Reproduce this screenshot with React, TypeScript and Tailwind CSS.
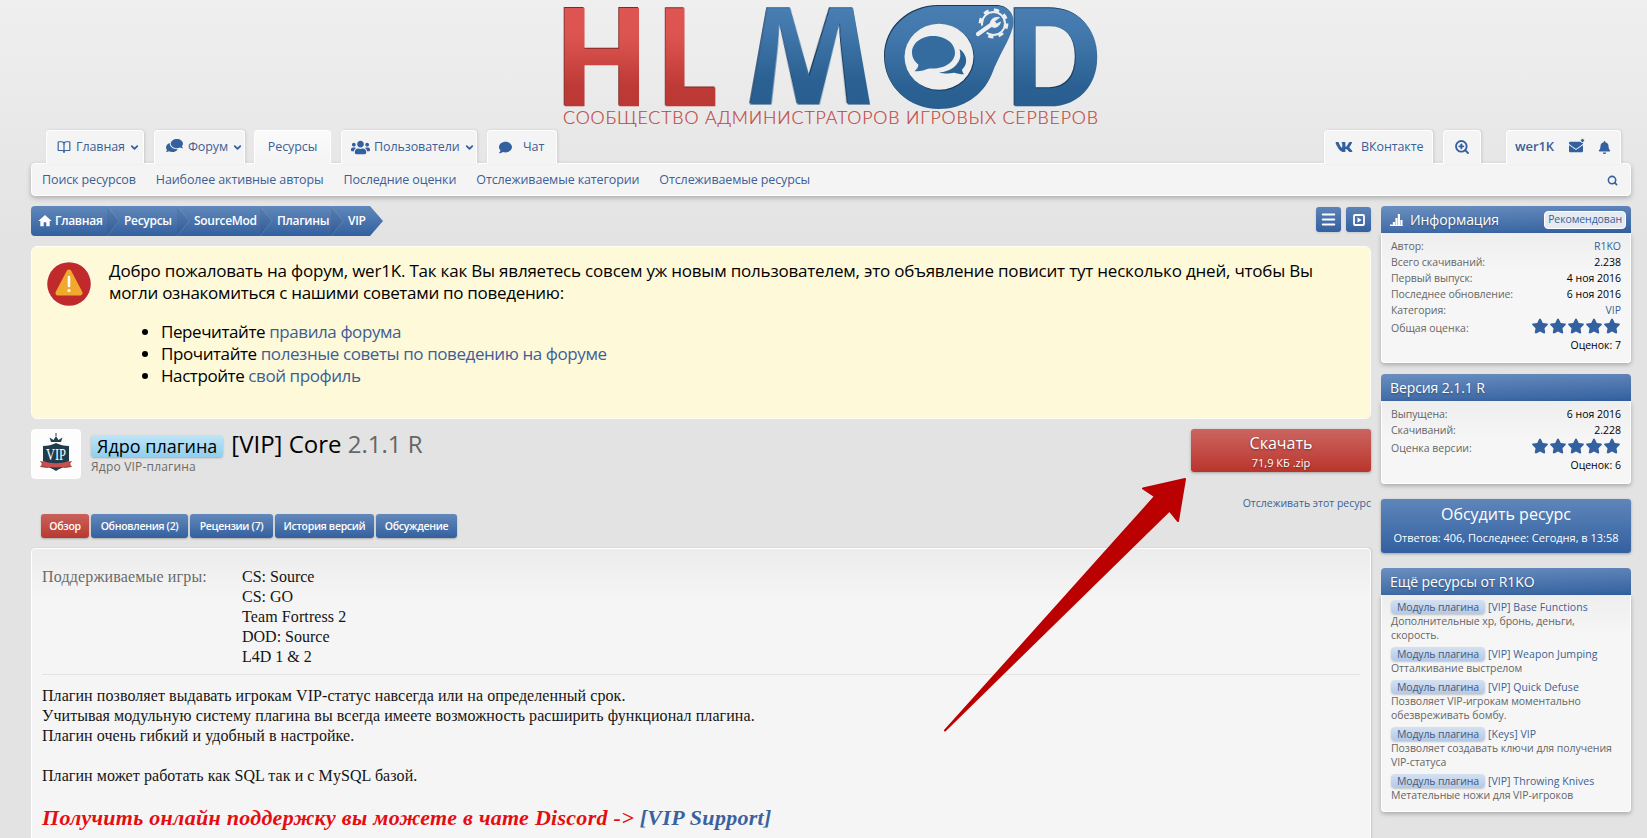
import React from "react";
import { BookOpen, ChevronDown, Menu, Search, ZoomIn } from "lucide-react";
import { FaBell, FaComment, FaComments, FaEnvelope, FaStar, FaUsers, FaVk } from "react-icons/fa";
import { MdHome } from "react-icons/md";

function Letter({ glyph, x, scale, inset, red }: { glyph: string; x: number; scale: number; inset: number; red?: boolean }) {
  const paint = red ? "url(#red)" : "url(#blue)";
  return (
    <g transform={`translate(${x} 105) scale(${scale} 1)`} className={red ? "drop-shadow-[-1px_-1px_0_#7a2a2a]" : "drop-shadow-[-1px_-1px_0_#1b3a5a]"}>
      <text x={-inset} y={0} fill={paint} stroke={paint} strokeWidth="2.600" fontSize="131" fontWeight="900" fontFamily="Lato, sans-serif">{glyph}</text>
    </g>
  );
}

function Logo() {
  const drop = "M938 5H996C1008 5 1015 14 1012 26C1008 41 999 52 991 73C982 95 962 108 938 108C908 108 884 86 884 56C884 27 908 5 938 5Z";
  return (
    <div className="relative ml-[559px] h-[130px] w-[544px]">
      <svg viewBox="559 0 544 130" className="h-full w-full overflow-visible">
        <defs>
          <linearGradient id="red" gradientUnits="userSpaceOnUse" x1="0" x2="0" y1="-97" y2="0">
            <stop offset="0" stopColor="#de5552" />
            <stop offset="0.3" stopColor="#dc5450" />
            <stop offset="0.8" stopColor="#be3a36" />
            <stop offset="1" stopColor="#bb3835" />
          </linearGradient>
          <linearGradient id="blue" gradientUnits="userSpaceOnUse" x1="0" x2="0" y1="-97" y2="0">
            <stop offset="0" stopColor="#487eb2" />
            <stop offset="0.3" stopColor="#4277ab" />
            <stop offset="0.8" stopColor="#2a6192" />
            <stop offset="1" stopColor="#295f90" />
          </linearGradient>
          <linearGradient id="drop" x1="0" x2="0" y1="0" y2="1">
            <stop offset="0" stopColor="#487eb2" />
            <stop offset="0.3" stopColor="#4277ab" />
            <stop offset="0.8" stopColor="#2a6192" />
            <stop offset="1" stopColor="#295f90" />
          </linearGradient>
        </defs>
        <Letter glyph="H" x={565.3} scale={0.885} inset={9.4} red />
        <Letter glyph="L" x={666.5} scale={0.84} inset={9.4} red />
        <Letter glyph="D" x={1015.4} scale={0.94} inset={9.4} />
        <path d={drop} fill="#1b3a5a" />
        <path d={drop} fill="url(#drop)" transform="translate(0.9 1)" />
        <ellipse cx="939.8" cy="57.6" rx="34.6" ry="33.2" fill="#1b3a5a" />
        <ellipse cx="939" cy="56.8" rx="34.5" ry="33" fill="#eeeeee" />
        <path d="M933 36C945 36 955 43 955 52.500C955 62 945 68.500 933 68.500C930 68.500 928 68.300 926 69.500C922 71.500 918 71 914.500 71.200C917 69 918.500 67 918.300 64.500C914.500 61.500 912 57.500 912 52.500C912 43 921.500 36 933 36Z" fill="#356ca0" />
        <path d="M959.500 49C965 53 967.500 59 965.500 64.500C964.500 67 963 68.500 962 69.500C962.300 71.500 963 73 964 74.300C960 74.300 956.500 73.500 954 72.700C949 74 943 73.500 939 72.500C951 72 959.500 64 960.300 56.500C960.500 54 960.200 51.500 959.500 49Z" fill="#2b6294" />
        <circle cx="993.500" cy="23.500" r="11.500" fill="none" stroke="#eee" strokeWidth="2" />
        <circle cx="993.500" cy="23.500" r="13.400" fill="none" stroke="#eee" strokeWidth="3" strokeDasharray="5.260 5.260" />
        <path d="M977 35L991 24" stroke="#4277ab" strokeWidth="8.500" strokeLinecap="round" />
        <path d="M978 34L991.500 24.500" stroke="#eee" strokeWidth="4.200" strokeLinecap="round" />
        <path d="M999.500 17.500C994 16.500 989.500 20 990.500 24.500C992 29 999 28.500 1000.500 22L996.500 24L994.500 21.300Z" fill="#eee" stroke="#eee" strokeWidth="0.800" />
        <text x="563" y="124" textLength="535" lengthAdjust="spacing" fontSize="17.800" fontWeight="300" fontFamily="Lato, sans-serif" fill="#bd4743" stroke="#bd4743" strokeWidth="0.200">СООБЩЕСТВО АДМИНИСТРАТОРОВ ИГРОВЫХ СЕРВЕРОВ</text>
      </svg>
      <span className="absolute left-[187px] top-[-15px] flex h-[136px] w-[128px] origin-[50%_121px] justify-center bg-[linear-gradient(to_bottom,#487eb2_18%,#4277ab_38%,#2a6192_75%,#295f90_90%)] bg-clip-text font-['Open_Sans',sans-serif] text-[136px] font-bold leading-none text-transparent drop-shadow-[-1px_-1px_0_#1b3a5a] [transform:matrix3d(1.16,0,0,0,0,1.393,0,-0.00405,0,0,1,0,0,0,0,1)]">M</span>
    </div>
  );
}

const tab = "flex h-[33px] items-center rounded-t border border-b-0 border-white bg-[#f4f4f4] text-[12.5px] tracking-[-0.1px] text-[#3c5f97] shadow-[1px_0_3px_rgba(0,0,0,0.13)]";
const ico = "text-[#33609f]";

function TopNav() {
  return (
    <>
      <div className="flex pl-[15px] pr-[10px]">
        <a className={`${tab} w-[98px] gap-[5px] pl-[10px]`}><BookOpen size={14} strokeWidth={2} className={ico} />Главная<ChevronDown size={11} strokeWidth={4} className={`${ico} -ml-px`} /></a>
        <a className={`${tab} ml-[10px] w-[91px] gap-[5px] pl-[11px]`}><FaComments size={17} className={`${ico} -mt-1 -scale-x-100`} />Форум<ChevronDown size={11} strokeWidth={4} className={`${ico} -ml-px`} /></a>
        <a className="relative z-10 -mb-px ml-[9px] flex h-[34px] w-[77px] items-center justify-center rounded-t border border-b-0 border-white bg-gradient-to-b from-[#fafafa] to-[#f4f4f4] text-[12.5px] tracking-[-0.1px] text-[#3c5f97]">Ресурсы</a>
        <a className={`${tab} ml-[10px] w-[136px] gap-[4px] pl-[9px]`}><FaUsers size={19} className={ico} />Пользователи<ChevronDown size={11} strokeWidth={4} className={ico} /></a>
        <a className={`${tab} ml-[10px] w-[70px] gap-[11px] pl-[11px]`}><FaComment size={13} className={ico} />Чат</a>
        <a className={`${tab} ml-auto w-[109px] gap-[8px] pl-[10px]`}><FaVk size={18} className={ico} />ВКонтакте</a>
        <a className={`${tab} ml-[10px] w-[38px] justify-center`}><ZoomIn size={16} strokeWidth={2.800} className={ico} /></a>
        <div className={`${tab} ml-[25px] w-[115px] pl-[8px]`}>
          <b className="w-[54px] text-[13px] font-semibold">wer1K</b>
          <span className="relative"><FaEnvelope size={14} className={ico} /><i className="absolute -right-[2px] -top-[2px] size-[5px] rounded-full border border-[#f4f4f4] bg-[#33609f]" /></span>
          <FaBell size={13} className={`${ico} ml-[15px]`} />
        </div>
      </div>
      <div className="flex h-[33px] items-center gap-[20px] rounded border border-white bg-[#f4f4f4] px-[10px] pt-px text-[12.5px] tracking-[-0.12px] text-[#3c5f97] shadow-[0_2px_5px_rgba(0,0,0,0.25)]">
        <a>Поиск ресурсов</a><a>Наиболее активные авторы</a><a>Последние оценки</a><a>Отслеживаемые категории</a><a>Отслеживаемые ресурсы</a>
        <Search size={11} strokeWidth={3.400} className="ml-auto mr-[2px] text-[#33609f]" />
      </div>
    </>
  );
}

const crumbs: [string, string][] = [["Ресурсы", "w-[70px]"], ["SourceMod", "w-[83px]"], ["Плагины", "w-[71px]"], ["VIP", "w-[52px]"]];

function Breadcrumb() {
  return (
    <div className="mt-[10px] flex h-[30px] justify-between">
      <div className="flex rounded-l-sm bg-gradient-to-b from-[#6088ba] to-[#33609f] text-[12px] font-semibold tracking-[-0.3px] text-white [clip-path:polygon(0_0,calc(100%-13px)_0,100%_50%,calc(100%-13px)_100%,0_100%)]">
        <span className="flex w-[76px] items-center gap-[2px] pb-px pl-[6px]"><MdHome size={16} />Главная</span>
        {crumbs.map(([name, width]) => (
          <span key={name} className={`${width} relative flex items-center pb-px pl-[17px]`}>
            <svg width="14" height="30" viewBox="0 0 14 30" className="absolute left-0 top-0"><path d="M0 0L12 15L0 30Z" fill="#000" opacity="0.050" /><path d="M0 0L12 15L0 30" fill="none" stroke="#fff" opacity="0.120" /></svg>
            {name}
          </span>
        ))}
      </div>
      <div className="mt-px flex gap-[5px]">
        <span className="flex size-[25px] items-center justify-center rounded-[3px] bg-gradient-to-b from-[#5c83b8] to-[#33609f] text-white shadow"><Menu size={17} strokeWidth={3} /></span>
        <span className="flex size-[25px] items-center justify-center rounded-[3px] bg-gradient-to-b from-[#5c83b8] to-[#33609f] shadow">
          <svg width="12" height="12" viewBox="0 0 12 12"><rect x="1" y="1" width="10" height="10" rx="1" fill="none" stroke="#fff" strokeWidth="1.800" /><path d="M4.500 3.200L8.500 6L4.500 8.800Z" fill="#fff" /></svg>
        </span>
      </div>
    </div>
  );
}

function Notice() {
  return (
    <div className="mt-[10px] flex h-[173px] rounded-md border border-[#fffef2] bg-[#fef9d9] pl-[14px] pt-[13px] text-[17px] leading-[22px] tracking-[-0.2px] text-black">
      <svg width="46" height="46" viewBox="0 0 46 46" className="mt-px shrink-0">
        <circle cx="23" cy="23" r="22.500" fill="#fff" />
        <circle cx="23" cy="23" r="21.800" fill="#c12a2a" />
        <path d="M23 11L34 32H12Z" fill="#f0a92c" stroke="#f0a92c" strokeWidth="5" strokeLinejoin="round" />
        <path d="M23 16V25" stroke="#fff" strokeWidth="2.600" strokeLinecap="round" />
        <circle cx="23" cy="29.500" r="1.600" fill="#fff" />
      </svg>
      <div className="ml-[17px]">
        <p className="whitespace-nowrap">Добро пожаловать на форум, wer1K. Так как Вы являетесь совсем уж новым пользователем, это объявление повисит тут несколько дней, чтобы Вы<br /><span className="tracking-[-0.3px]">могли ознакомиться с нашими советами по поведению:</span></p>
        <ul className="mt-[17px] list-disc pl-[52px] tracking-[-0.42px]">
          <li>Перечитайте <a className="text-[#3c5f97]">правила форума</a></li>
          <li>Прочитайте <a className="text-[#3c5f97]">полезные советы по поведению на форуме</a></li>
          <li>Настройте <a className="text-[#3c5f97]">свой профиль</a></li>
        </ul>
      </div>
    </div>
  );
}

function ResourceHead() {
  return (
    <div className="mt-[10px] flex h-[85px]">
      <div className="flex size-[50px] items-center justify-center rounded-sm border border-white bg-[#fdfdfd]">
        <svg width="34" height="42" viewBox="0 0 34 42">
          <path d="M12 9L10.500 4.500L14.500 7L17 3L19.500 7L23.500 4.500L22 9Z" fill="#24404f" />
          <path d="M17 0V3" stroke="#24404f" strokeWidth="1" />
          <path d="M4 13C9 13 13 12 17 10C21 12 25 13 30 13V30C27 34 21 35 17 38C13 35 7 34 4 30Z" fill="#1f3c4d" />
          <path d="M1 28L7 29V33H27V29L33 28L31 31L33 34L26 35L17 33L8 35L1 34L3 31Z" fill="#b04545" />
          <path d="M4 28C12 31 22 31 30 28V32.500C22 35 12 35 4 32.500Z" fill="#c9504d" />
          <text x="17" y="27" textAnchor="middle" fontSize="16" fontFamily="Liberation Serif, serif" textLength="20" lengthAdjust="spacingAndGlyphs" fill="#fff">VIP</text>
        </svg>
      </div>
      <div className="ml-[10px]">
        <h1 className="flex h-[30px] items-baseline text-[24px] leading-[30px] text-black">
          <span className="mr-[8px] rounded-[3px] bg-gradient-to-b from-[#bfe5f6] to-[#90cfee] px-[6px] text-[18px] leading-[22px] shadow-[0_1px_2px_rgba(0,0,0,0.25)]">Ядро плагина</span>
          [VIP] Core&nbsp;<span className="text-[#666]">2.1.1 R</span>
        </h1>
        <p className="text-[12px] leading-4 tracking-[0.2px] text-[#6b6b6b]">Ядро VIP-плагина</p>
      </div>
      <div className="ml-auto flex flex-col items-end">
        <a className="flex h-[43px] w-[180px] flex-col items-center rounded-[3px] bg-gradient-to-b from-[#cb645f] to-[#b9342c] pt-[2px] text-white shadow-[0_1px_3px_rgba(0,0,0,0.3)] [text-shadow:0_1px_2px_rgba(0,0,0,0.4)]">
          <span className="text-[16px] leading-[25px]">Скачать</span>
          <span className="-mt-px text-[11px] leading-[15px]">71,9 КБ .zip</span>
        </a>
        <a className="mt-[23px] text-[10.5px] leading-4 text-[#3c5f97]">Отслеживать этот ресурс</a>
      </div>
    </div>
  );
}

const sections: [string, string][] = [
  ["Обзор", "w-[48px] from-[#c9615c] to-[#b9382f]"],
  ["Обновления (2)", "w-[97px] from-[#6389ba] to-[#33609f]"],
  ["Рецензии (7)", "w-[83px] from-[#6389ba] to-[#33609f]"],
  ["История версий", "w-[99px] from-[#6389ba] to-[#33609f]"],
  ["Обсуждение", "w-[81px] from-[#6389ba] to-[#33609f]"],
];

function Content() {
  return (
    <>
      <div className="flex gap-[2px] pl-[10px]">
        {sections.map(([name, look]) => (
          <a key={name} className={`${look} flex h-[24px] items-center justify-center whitespace-nowrap rounded-[3px] bg-gradient-to-b pt-px text-[10.5px] font-semibold tracking-[-0.3px] text-white shadow-[0_1px_2px_rgba(0,0,0,0.25)]`}>{name}</a>
        ))}
      </div>
      <div className="mt-[10px] h-[320px] rounded-t border border-white bg-gradient-to-b from-[#ececec] to-[#f5f5f5] to-[50px] px-[10px] pt-[18px] font-['Liberation_Serif',serif] text-[16px] leading-[20px] text-[#141414] shadow-[1px_0_2px_rgba(0,0,0,0.12)]">
        <div className="flex border-b border-[#e3e3e3] pb-[7px]">
          <span className="w-[200px] tracking-[0.15px] text-[#6b6b6b]">Поддерживаемые игры:</span>
          <div><p>CS: Source</p><p>CS: GO</p><p className="tracking-[0.1px]">Team Fortress 2</p><p>DOD: Source</p><p>L4D 1 &amp; 2</p></div>
        </div>
        <div className="mt-[11px] tracking-[0.07px]">
          <p>Плагин позволяет выдавать игрокам VIP-статус навсегда или на определенный срок.</p>
          <p>Учитывая модульную систему плагина вы всегда имеете возможность расширить функционал плагина.</p>
          <p>Плагин очень гибкий и удобный в настройке.</p>
          <p className="mt-[20px]">Плагин может работать как SQL так и с MySQL базой.</p>
        </div>
        <p className="mt-[18px] text-[22px] font-bold italic leading-[28px] tracking-[0.28px] text-[#e60d12]">Получить онлайн поддержку вы можете в чате Discord -&gt; <a className="text-[#3a629f]">[VIP Support]</a></p>
      </div>
    </>
  );
}

function Row({ label, value, link }: { label: string; value: string; link?: boolean }) {
  return <div className="flex justify-between"><span className="tracking-[-0.07px] text-[#666]">{label}</span><span className={link ? "text-[#3c5f97]" : "text-black"}>{value}</span></div>;
}

function Rating({ label, votes }: { label: string; votes: string }) {
  return (
    <>
      <div className="flex h-[19px] items-center justify-between"><span className="text-[#666]">{label}</span><span className="-mt-[3px] flex text-[#33609f]">{[0, 1, 2, 3, 4].map((i) => <FaStar key={i} size={18} className="px-[0.500px]" />)}</span></div>
      <div className="text-right text-black">{votes}</div>
    </>
  );
}

const head = "flex h-[27px] items-center rounded-t-sm bg-[linear-gradient(178deg,#6b8fbf,#33609f)] px-[9px] text-[14px] tracking-[-0.1px] text-white [text-shadow:0_1px_2px_rgba(0,0,0,0.35)]";
const body = "rounded-b border border-t-0 border-white bg-gradient-to-b from-[#eeeeee] to-[#f6f6f6] to-[40px] px-[9px] pt-[5px] text-[10.5px] leading-4 shadow-[0_2px_4px_rgba(0,0,0,0.25)]";

const modules: [string, string][] = [
  ["[VIP] Base Functions", "Дополнительные хр, бронь, деньги, скорость."],
  ["[VIP] Weapon Jumping", "Отталкивание выстрелом"],
  ["[VIP] Quick Defuse", "Позволяет VIP-игрокам моментально обезвреживать бомбу."],
  ["[Keys] VIP", "Позволяет создавать ключи для получения VIP-статуса"],
  ["[VIP] Throwing Knives", "Метательные ножи для VIP-игроков"],
];

function Sidebar() {
  return (
    <aside className="mt-[10px] w-[250px] shrink-0">
      <div className={head}>
        <svg width="13" height="12" viewBox="0 0 13 12" className="mr-[7px]"><path d="M0 12V10.500H2.400V12ZM2.800 12V8H5V12ZM5.400 12V4H7.400V12ZM7.800 12V0H10V12ZM10.400 12V6H12.500V12Z" fill="#fff" /><path d="M0 11H12.500V12H0Z" fill="#fff" /></svg>
        Информация
        <span className="-mr-[4px] ml-auto flex h-[18px] items-center rounded-sm border border-white bg-[#e6ebf2] px-[3px] text-[10.5px] tracking-[-0.1px] text-[#3c5f97] [text-shadow:none]">Рекомендован</span>
      </div>
      <div className={`${body} h-[130px]`}>
        <Row label="Автор:" value="R1KO" link />
        <Row label="Всего скачиваний:" value="2.238" />
        <Row label="Первый выпуск:" value="4 ноя 2016" />
        <Row label="Последнее обновление:" value="6 ноя 2016" />
        <Row label="Категория:" value="VIP" link />
        <Rating label="Общая оценка:" votes="Оценок: 7" />
      </div>
      <div className={`${head} mt-[11px]`}>Версия 2.1.1 R</div>
      <div className={`${body} h-[83px]`}>
        <Row label="Выпущена:" value="6 ноя 2016" />
        <Row label="Скачиваний:" value="2.228" />
        <Rating label="Оценка версии:" votes="Оценок: 6" />
      </div>
      <a className="mt-[15px] flex h-[54px] flex-col items-center rounded-[3px] bg-gradient-to-b from-[#5f86ba] to-[#33609f] pt-[2px] text-white shadow-[0_1px_3px_rgba(0,0,0,0.3)]">
        <span className="text-[16px] leading-[26px]">Обсудить ресурс</span>
        <span className="mt-[3px] text-[11px] leading-4">Ответов: 406, Последнее: Сегодня, в 13:58</span>
      </a>
      <div className={`${head} mt-[15px]`}>Ещё ресурсы от R1KO</div>
      <div className={`${body} flex h-[217px] flex-col gap-[5px]`}>
        {modules.map(([name, text]) => (
          <div key={name} className="leading-[14px] tracking-[-0.05px] text-[#666]">
            <div className="flex gap-[3px]"><span className="rounded-sm bg-gradient-to-b from-[#d5e1f1] to-[#b3c9e6] px-[6px] tracking-[-0.15px] text-[#45597c] shadow-[0_1px_2px_rgba(0,0,0,0.2)]">Модуль плагина</span><a className="tracking-[0.05px] text-[#3c5f97]">{name}</a></div>
            {text}
          </div>
        ))}
      </div>
    </aside>
  );
}

export default function App() {
  return (
    <div className="relative h-[838px] w-[1647px] overflow-hidden bg-[linear-gradient(to_bottom,#efefef,#e3e3e3_240px)] font-['Open_Sans','Noto_Sans',sans-serif]">
      <Logo />
      <div className="ml-[31px] w-[1600px]">
        <TopNav />
        <div className="flex gap-[10px]">
          <main className="w-[1340px]">
            <Breadcrumb />
            <Notice />
            <ResourceHead />
            <Content />
          </main>
          <Sidebar />
        </div>
      </div>
      <svg width="260" height="270" viewBox="0 0 260 270" className="pointer-events-none absolute left-[930px] top-[470px]">
        <path d="M15 260.500L225 26.500L213 18.500L255 9L248 51L239.500 40.500Z" fill="#ba0000" stroke="#ba0000" strokeWidth="2" strokeLinejoin="round" />
      </svg>
    </div>
  );
}
